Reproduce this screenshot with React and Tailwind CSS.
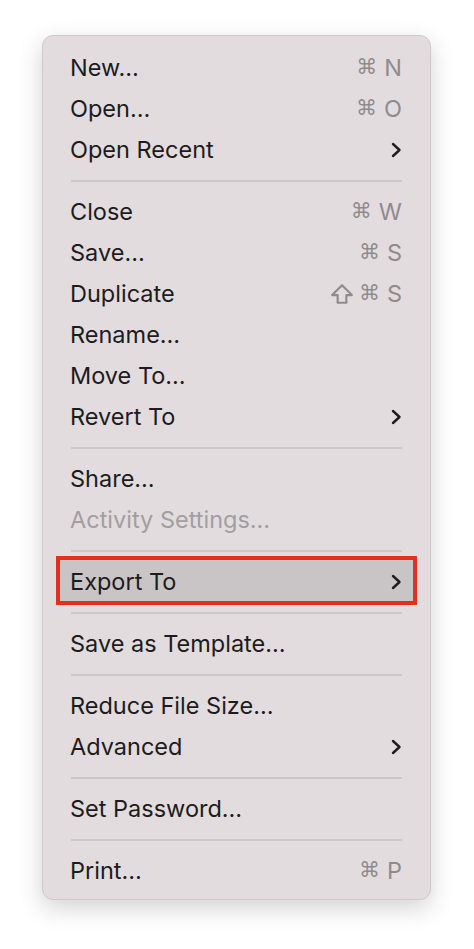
import React from "react";

const Chevron = () => (
  <svg width="12" height="18" viewBox="0 0 12 18" className="text-[#1f1d1e]">
    <path d="M3 3 L9.5 9 L3 15" fill="none" stroke="currentColor" strokeWidth="2.4" strokeLinecap="round" strokeLinejoin="round" />
  </svg>
);

const Shortcut = ({ keys }) => (
  <span className="flex items-center gap-[3px] text-[#8f8b8d]">
    {keys.map((k, i) =>
      k === "cmd" ? (
        <span key={i} className="text-[21px] font-['DejaVu_Sans',sans-serif] leading-none">⌘</span>
      ) : k === "shift" ? (
        <svg key={i} width="24" height="22" viewBox="0 0 22 20" className="mr-[2px]">
          <path d="M11 2 L20 11 L15 11 L15 18 L7 18 L7 11 L2 11 Z" fill="none" stroke="currentColor" strokeWidth="2" strokeLinejoin="round" />
        </svg>
      ) : (
        <span key={i} className="ml-[4px] leading-none">{k}</span>
      )
    )}
  </span>
);

const groups = [
  [
    { label: "New…", keys: ["cmd", "N"] },
    { label: "Open…", keys: ["cmd", "O"] },
    { label: "Open Recent", sub: true },
  ],
  [
    { label: "Close", keys: ["cmd", "W"] },
    { label: "Save…", keys: ["cmd", "S"] },
    { label: "Duplicate", keys: ["shift", "cmd", "S"] },
    { label: "Rename…" },
    { label: "Move To…" },
    { label: "Revert To", sub: true },
  ],
  [
    { label: "Share…" },
    { label: "Activity Settings…", disabled: true },
  ],
  [{ label: "Export To", sub: true, active: true }],
  [{ label: "Save as Template…" }],
  [
    { label: "Reduce File Size…" },
    { label: "Advanced", sub: true },
  ],
  [{ label: "Set Password…" }],
  [{ label: "Print…", keys: ["cmd", "P"] }],
];

const Item = ({ item }) => (
  <div className="relative h-[41px] flex items-center">
    {item.active && (
      <div className="absolute left-[13px] right-[13px] top-[-5px] bottom-[-3px] bg-[#c9c5c7] border-[4px] border-[#e3301c]" />
    )}
    <div className="relative flex flex-1 items-center justify-between pl-[27px] pr-[28px]">
      <span className={item.disabled ? "text-[#a29ea0]" : "text-[#1d1b1c]"}>{item.label}</span>
      {item.keys && <Shortcut keys={item.keys} />}
      {item.sub && <Chevron />}
    </div>
  </div>
);

export default function App() {
  return (
    <div className="w-[474px] h-[949px] bg-white pt-[35px] pl-[42px] font-['Inter',sans-serif] text-[23.5px]">
      <div className="w-[389px] rounded-[11px] bg-[#e3dcdf] border border-[#cfc9cc] shadow-[0_8px_24px_rgba(0,0,0,0.18)] pt-[11px] pb-[8px]">
        {groups.map((g, gi) => (
          <div key={gi}>
            {gi > 0 && (
              <div className="h-[21px] flex items-center px-[28px]">
                <div className="h-[2px] w-full bg-[#cdc7ca]" />
              </div>
            )}
            {g.map((item) => (
              <Item key={item.label} item={item} />
            ))}
          </div>
        ))}
      </div>
    </div>
  );
}
